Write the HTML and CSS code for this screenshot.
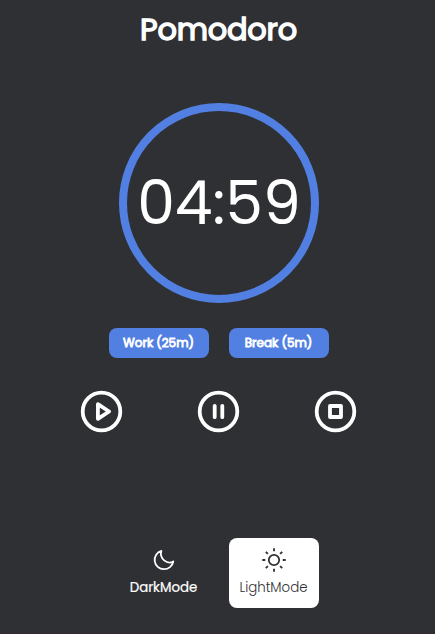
FILE: index.html
```html
<!DOCTYPE html>
<html lang="en">
<head>
<meta charset="utf-8">
<title>Pomodoro</title>
<link rel="stylesheet" href="styles.css">
</head>
<body>
<main class="app">
  <h1 class="title">Pomodoro</h1>
  <div class="timer"><span class="time">04:59</span></div>
  <div class="sessions">
    <button class="session work">Work (25m)</button>
    <button class="session break">Break (5m)</button>
  </div>
  <div class="controls">
    <button class="control" aria-label="Play"><svg viewBox="0 0 43 43"><circle cx="21.5" cy="21.5" r="18.8"/><path d="M17.9 14.2v14.6l11.2-7.3z"/></svg></button>
    <button class="control" aria-label="Pause"><svg viewBox="0 0 43 43"><circle cx="21.5" cy="21.5" r="18.8"/><path d="M17.7 15.8v11.4M25.3 15.8v11.4"/></svg></button>
    <button class="control" aria-label="Stop"><svg viewBox="0 0 43 43"><circle cx="21.5" cy="21.5" r="18.8"/><path d="M16 16h11v11H16z"/></svg></button>
  </div>
  <div class="modes">
    <button class="mode dark">
      <svg viewBox="0 0 24 24"><path d="M9.4 2.8A9.4 9.4 0 1 0 21.3 13.5C15.2 16.8 7 10.8 9.4 2.8z"/></svg>
      <span>DarkMode</span>
    </button>
    <button class="mode light">
      <svg viewBox="0 0 24 24"><circle cx="12" cy="12" r="5.2"/><path d="M12 .3v3M12 20.7v3M.3 12h3M20.7 12h3M3.8 3.8l2.1 2.1M18.1 18.1l2.1 2.1M3.8 20.2l2.1-2.1M18.1 5.9l2.1-2.1"/></svg>
      <span>LightMode</span>
    </button>
  </div>
</main>
</body>
</html>
```
FILE: styles.css
```css
* { box-sizing: border-box; }
html { overflow: hidden; background: #2f3034; }
body {
  margin: 0;
  color: #fff;
  font-family: Poppins, Inter, sans-serif;
}
button {
  padding: 0;
  border: 0;
  color: inherit;
  background: none;
  font: inherit;
}
.app {
  display: flex;
  flex-direction: column;
  align-items: center;
  width: 438px;
  height: 634px;
  border-bottom: 1px solid #35282f;
}
.title {
  margin: 0;
  padding: 6px 1px 0 0;
  height: 103px;
  font-size: 30.4px;
  line-height: 48px;
  font-weight: 400;
  letter-spacing: -.2px;
  -webkit-text-stroke: 1.4px currentColor;
}
.timer {
  display: flex;
  align-items: center;
  justify-content: center;
  width: 200px;
  height: 200px;
  border: 8px solid #5280e2;
  border-radius: 50%;
}
.time {
  font-size: 60px;
  line-height: 90px;
  font-weight: 400;
  white-space: nowrap;
}
.sessions {
  display: flex;
  gap: 20px;
  margin-top: 25px;
}
.session {
  width: 100px;
  height: 30px;
  padding-right: 1px;
  border-radius: 8px;
  background: #5280e2;
  font-size: 12px;
  font-weight: 400;
  -webkit-text-stroke: .8px currentColor;
  white-space: nowrap;
}
.controls {
  display: flex;
  gap: 74px;
  margin: 32px 2px 0 0;
}
.control { width: 43px; height: 43px; }
.control svg {
  display: block;
  fill: none;
  stroke: currentColor;
  stroke-width: 3.8;
  stroke-linecap: round;
  stroke-linejoin: round;
}
.modes {
  display: flex;
  gap: 20px;
  margin-top: 105px;
}
.mode {
  display: flex;
  flex-direction: column;
  align-items: center;
  width: 90px;
  height: 70px;
  padding-top: 10px;
  border-radius: 8px;
  font-size: 13.333px;
  line-height: 20px;
}
.mode svg {
  width: 24px;
  height: 24px;
  margin-bottom: 6px;
  fill: none;
  stroke: currentColor;
  stroke-width: 1.8;
  stroke-linejoin: round;
}
.mode span { margin-right: 1px; }
.dark { -webkit-text-stroke: .2px currentColor; }
.light { color: #2f3034; background: #fff; font-weight: 300; }
```
